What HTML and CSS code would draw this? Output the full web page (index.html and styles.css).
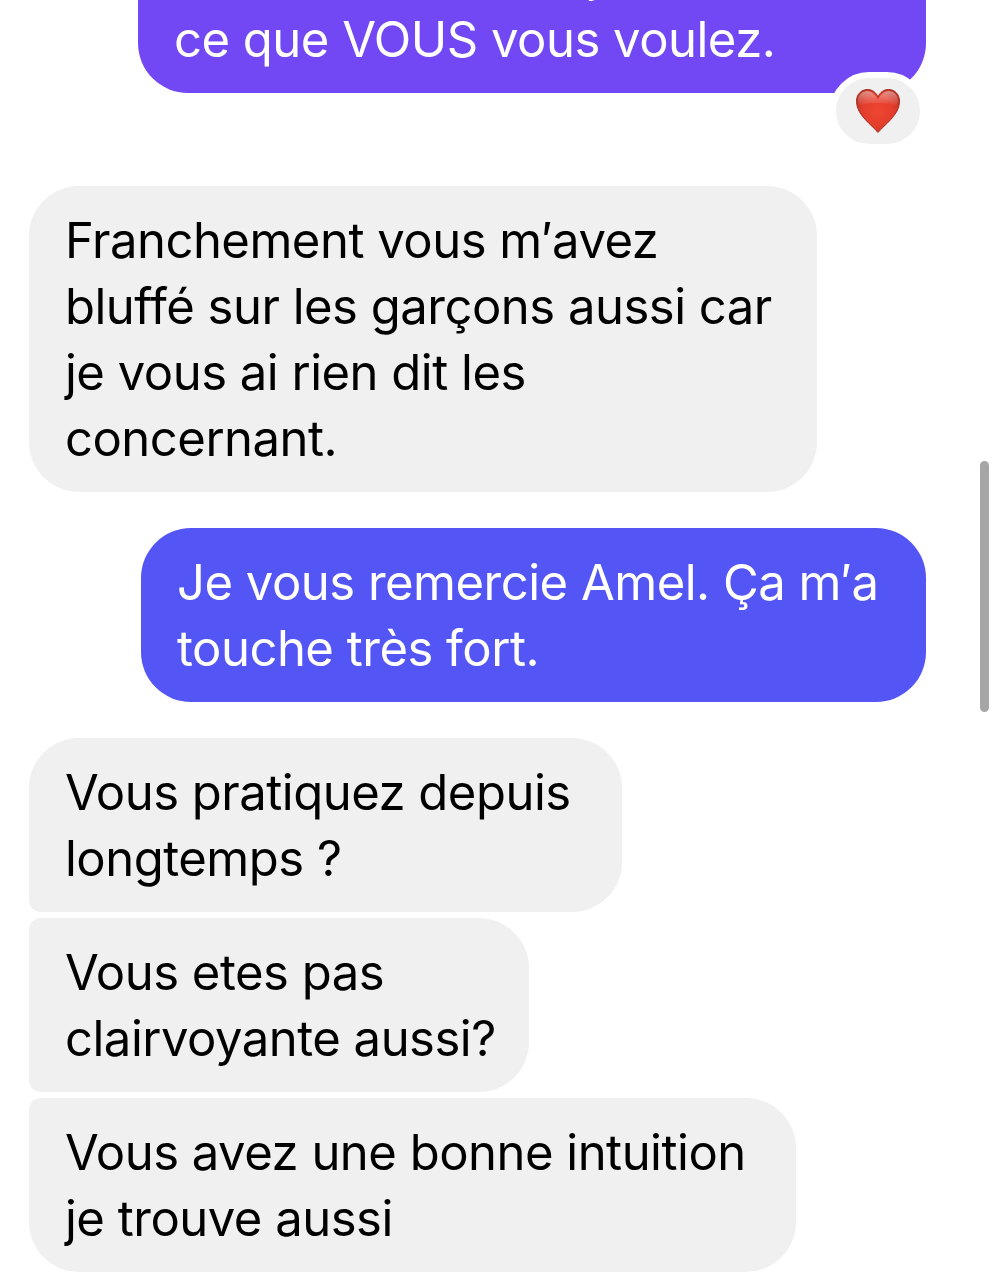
FILE: index.html
```html
<!DOCTYPE html>
<html lang="fr">
<head>
  <meta charset="UTF-8">
  <meta name="viewport" content="width=device-width, initial-scale=1.0">
  <title>Messages</title>
  <link rel="stylesheet" href="styles.css">
</head>
<body>
  <main class="chat">
    <div class="msg msg-out msg-violet msg-first">
      <p>Vous allez dire toujours<br>ce que VOUS vous voulez.</p>
      <span class="reaction">
        <svg viewBox="0 0 44 44" width="44" height="44" aria-hidden="true">
          <defs>
            <radialGradient id="heartFill" cx="0.5" cy="0.5" r="0.62">
              <stop offset="0" stop-color="#ee4630"/>
              <stop offset="0.6" stop-color="#e23d2c"/>
              <stop offset="1" stop-color="#b02e20"/>
            </radialGradient>
            <linearGradient id="heartShine" x1="0" y1="0" x2="0" y2="1">
              <stop offset="0" stop-color="#fff" stop-opacity="0.45"/>
              <stop offset="1" stop-color="#fff" stop-opacity="0"/>
            </linearGradient>
          </defs>
          <path d="M22 43.500 C16 36 0.500 26 0.500 12.500 C0.500 5 5.500 0.500 11.500 0.500 C16 0.500 20 3 22 8 C24 3 28 0.500 32.500 0.500 C38.500 0.500 43.500 5 43.500 12.500 C43.500 26 28 36 22 43.500 Z" fill="url(#heartFill)" stroke="#a92d20" stroke-width="1"/>
          <path d="M22 11 C20 6 16 2 11.500 2 C6 2 2 6 2 12 C2 14 2.500 16 3 17 C9 13 35 13 41 17 C41.500 16 42 14 42 12 C42 6 38 2 32.500 2 C28 2 24 6 22 11 Z" fill="url(#heartShine)"/>
        </svg>
      </span>
    </div>

    <div class="msg msg-in msg-franchement">
      <p>Franchement vous m′avez<br>bluffé sur les garçons aussi car<br>je vous ai rien dit les<br>concernant.</p>
    </div>

    <div class="msg msg-out msg-blue">
      <p>Je vous remercie Amel. Ça m′a<br>touche très fort.</p>
    </div>

    <div class="group">
      <div class="msg msg-in group-first">
        <p>Vous pratiquez depuis<br>longtemps ?</p>
      </div>
      <div class="msg msg-in group-mid">
        <p>Vous etes pas<br>clairvoyante aussi?</p>
      </div>
      <div class="msg msg-in group-last">
        <p>Vous avez une bonne intuition<br>je trouve aussi</p>
      </div>
    </div>
  </main>
  <div class="scrollbar"></div>
</body>
</html>
```

FILE: styles.css
```css
html, body {
  margin: 0;
  padding: 0;
  height: 100%;
  background-color: #fff;
  overflow: hidden;
}
body {
  font-family: 'Inter', 'Liberation Sans', sans-serif;
}
.chat {
  display: flex;
  flex-direction: column;
  align-items: flex-start;
  padding: 0 72px 0 29px;
  margin-top: -81px; /* first bubble is cut off by the top of the screen */
}
.msg {
  position: relative;
  box-sizing: border-box;
  padding: 22px 38px 20px 36px;
  border-radius: 50px;
  font-size: 49px;
  line-height: 66px;
  letter-spacing: -0.5px;
}
.msg p {
  margin: 0;
  white-space: nowrap;
}
.msg-out {
  align-self: flex-end;
  color: #fff;
}
.msg-in {
  background-color: #f0f0f0;
  color: #000;
}
.msg-violet {
  background-color: #7248f5;
  width: 788px;
}
.msg-blue {
  background-color: #5356f5;
  width: 785px;
  margin-top: 36px;
}
.msg-franchement {
  width: 788px;
  margin-top: 93px;
}
.group {
  display: flex;
  flex-direction: column;
  align-items: flex-start;
  gap: 6px;
  margin-top: 36px;
}
.group-first {
  width: 593px;
  border-bottom-left-radius: 12px;
}
.group-mid {
  width: 500px;
  border-top-left-radius: 12px;
  border-bottom-left-radius: 12px;
}
.group-last {
  width: 767px;
  border-top-left-radius: 12px;
}
/* heart reaction sits over the corner of the bubble */
.reaction {
  position: absolute;
  right: 0;
  bottom: -57px;
  display: flex;
  align-items: center;
  justify-content: center;
  width: 84px;
  height: 66px;
  background-color: #f0f0f0;
  border: 6px solid #fff;
  border-radius: 39px;
}
.reaction svg {
  display: block;
}
.scrollbar {
  position: absolute;
  left: 980px;
  top: 461px;
  width: 9px;
  height: 251px;
  background-color: #a6a6a6;
  border-radius: 5px;
}
```
